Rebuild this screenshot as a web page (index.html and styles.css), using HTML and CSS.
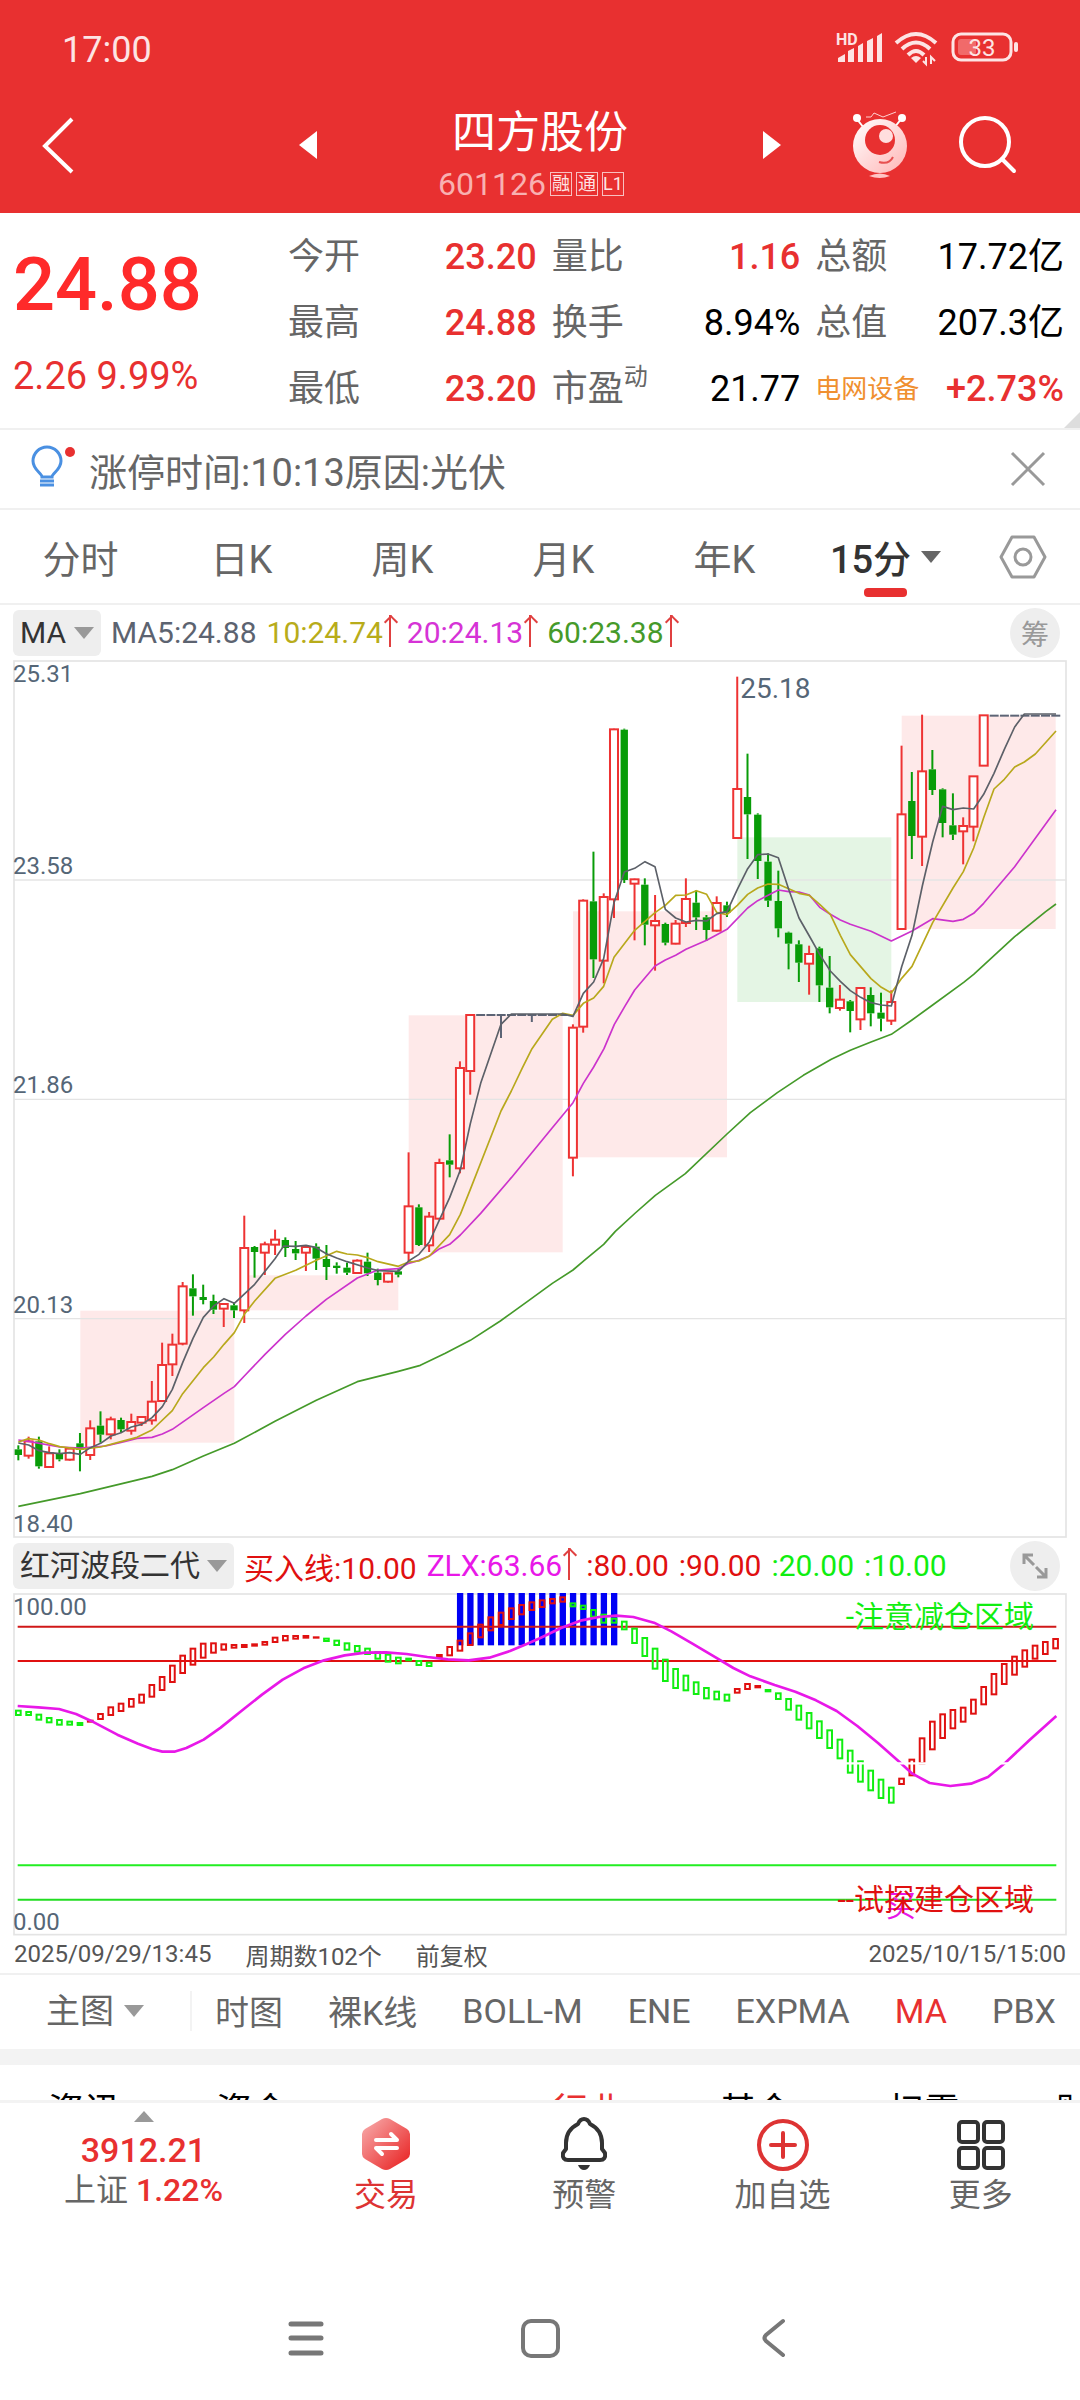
FILE: index.html
```html
<!DOCTYPE html>
<html lang="zh-CN">
<head>
  <meta charset="UTF-8" />
  <meta name="viewport" content="width=device-width, initial-scale=1" />
  <title>四方股份 601126</title>
  <link rel="stylesheet" href="styles.css">
</head>
<body>
  <header class="top">
    <div class="status">
      <span>17:00</span>
      <svg class="status-icons" width="184" height="36" viewBox="0 0 184 36" fill="#fde4e4" aria-hidden="true">
        <text class="hd" x="0" y="13">HD</text>
        <path d="M2 30V26L9 22V30ZM12 30V19L18 16V30ZM22 30V14L27 11V30ZM31 30V9L37 6V30ZM41 30V4L46 1V30Z" />
        <g fill="none" stroke="#fde4e4" stroke-width="4">
          <path d="M60 11Q80 -7 100 11" />
          <path d="M66 17Q80 4 94 17" />
          <path d="M72 23Q80 15 88 23" />
        </g>
        <path d="M75 26Q80 22 85 26L80 31Z" />
        <path d="M90 25V32L87 29M95 32V25L99 29" stroke="#fde4e4" stroke-width="2" fill="none" />
        <rect x="117" y="2" width="58" height="26" rx="8" fill="none" stroke="#fde4e4" stroke-width="3" />
        <rect x="122" y="7" width="18" height="16" rx="3" fill="#f16a6a" />
        <rect x="178" y="10" width="4" height="10" rx="2" />
        <text class="battery" x="146" y="24" text-anchor="middle">33</text>
      </svg>
    </div>
    <div class="titlebar">
      <button class="icon-btn back" aria-label="返回">
        <svg width="34" height="60" viewBox="0 0 34 60" fill="none" stroke="#fff" stroke-width="4"><path d="M31 4L4 31L31 57" /></svg>
      </button>
      <button class="icon-btn" aria-label="上一只">
        <svg width="20" height="30" viewBox="0 0 20 30" fill="#fff"><path d="M19 1V29L1 15Z" /></svg>
      </button>
      <div class="stock">
        <h1>四方股份</h1>
        <p><span>601126</span><i>融</i><i>通</i><i>L1</i></p>
      </div>
      <button class="icon-btn" aria-label="下一只">
        <svg width="20" height="30" viewBox="0 0 20 30" fill="#fff"><path d="M1 1V29L19 15Z" /></svg>
      </button>
      <div class="tools">
        <button class="icon-btn" aria-label="助手">
          <svg width="56" height="68" viewBox="0 0 56 68">
            <defs>
              <linearGradient id="robot" x1="0" y1="0" x2="1" y2="1">
                <stop offset="0" stop-color="#fff" /><stop offset="1" stop-color="#ffb5b5" />
              </linearGradient>
            </defs>
            <path d="M4 7L12 17M50 7L42 17" stroke="#fff" stroke-width="2" />
            <circle cx="5" cy="7" r="4" fill="#fff" /><circle cx="50" cy="7" r="4" fill="#fff" />
            <path d="M14 6L19 6L22 2L31 6L44 1" stroke="#ffd0d0" stroke-width="1" fill="none" />
            <circle cx="28" cy="35" r="27" fill="url(#robot)" />
            <circle cx="28" cy="29" r="15" fill="#e83030" />
            <circle cx="34" cy="25" r="7" fill="#ffdede" />
            <path d="M27 51Q37 54 41 46" stroke="#e85050" stroke-width="2" fill="none" />
            <path d="M17 65Q28 60 38 65Q28 69 17 65Z" fill="#ffc4c4" />
          </svg>
        </button>
        <button class="icon-btn" aria-label="搜索">
          <svg width="60" height="60" viewBox="0 0 60 60" fill="none" stroke="#fff" stroke-width="4" stroke-linecap="round"><circle cx="27" cy="27" r="24" /><path d="M44 44L56 56" /></svg>
        </button>
      </div>
    </div>
  </header>

  <section class="quote">
    <div class="price">
      <strong>24.88</strong>
      <span>2.26 9.99%</span>
    </div>
    <dl>
      <div><dt>今开</dt><dd class="up">23.20</dd></div>
      <div><dt>量比</dt><dd class="up">1.16</dd></div>
      <div><dt>总额</dt><dd>17.72亿</dd></div>
      <div><dt>最高</dt><dd class="up">24.88</dd></div>
      <div><dt>换手</dt><dd>8.94%</dd></div>
      <div><dt>总值</dt><dd>207.3亿</dd></div>
      <div><dt>最低</dt><dd class="up">23.20</dd></div>
      <div><dt>市盈<sup>动</sup></dt><dd>21.77</dd></div>
      <div><dt class="sector">电网设备</dt><dd class="up">+2.73%</dd></div>
    </dl>
  </section>

  <section class="notice">
    <svg width="46" height="46" viewBox="0 0 46 46" fill="none" stroke="#4a90e2" stroke-width="3">
      <path d="M11 31C11 27 2 24 2 15A14 14 0 0 1 30 15C30 24 21 27 21 31Z" />
      <path d="M9 35H23M9 39H23" />
      <circle cx="39" cy="6" r="5" fill="#e83030" stroke="none" />
    </svg>
    <p>涨停时间:10:13原因:光伏</p>
    <button class="icon-btn" aria-label="关闭">
      <svg width="36" height="36" viewBox="0 0 36 36" stroke="#999" stroke-width="3"><path d="M2 2L34 34M34 2L2 34" /></svg>
    </button>
  </section>

  <nav class="periods">
    <button>分时</button>
    <button>日K</button>
    <button>周K</button>
    <button>月K</button>
    <button>年K</button>
    <button class="active">15分<span class="caret"></span></button>
    <button aria-label="设置">
      <svg width="48" height="44" viewBox="0 0 48 44" fill="none" stroke="#999" stroke-width="3" stroke-linejoin="round"><path d="M13 2H35L46 22L35 42H13L2 22Z" /><circle cx="24" cy="22" r="8" /></svg>
    </button>
  </nav>

  <div class="legend">
    <label class="chip"><select aria-label="主图指标"><option>MA</option></select><span class="caret"></span></label>
    <span class="ma5">MA5:24.88</span>
    <span class="ma10">10:24.74<b class="rise"></b></span>
    <span class="ma20">20:24.13<b class="rise"></b></span>
    <span class="ma60">60:23.38<b class="rise"></b></span>
    <button class="round">筹</button>
  </div>
  <div class="chart">
    <svg id="kline" viewBox="38 2 3162 2634"></svg>
    <div class="axis"><span>25.31</span><span>23.58</span><span>21.86</span><span>20.13</span><span>18.40</span></div>
    <span class="peak">25.18</span>
  </div>

  <div class="legend">
    <label class="chip"><select aria-label="副图指标"><option>红河波段二代</option></select><span class="caret"></span></label>
    <span class="line-red">买入线:10.00</span>
    <span class="line-zlx">ZLX:63.66<b class="rise"></b></span>
    <span class="line-red">:80.00</span>
    <span class="line-red">:90.00</span>
    <span class="line-green">:20.00</span>
    <span class="line-green">:10.00</span>
    <button class="round" aria-label="全屏">
      <svg width="26" height="26" viewBox="0 0 26 26" fill="none" stroke="#999" stroke-width="3"><path d="M11 2H2V11M2 2L12 12M15 24H24V15M24 24L14 14" /></svg>
    </button>
  </div>
  <div class="chart">
    <svg id="band" viewBox="38 188 3162 1028"></svg>
    <div class="axis"><span>100.00</span><span>0.00</span></div>
    <span class="mark reduce">-注意减仓区域</span>
    <span class="mark buy">买</span>
    <span class="mark build">--试探建仓区域</span>
  </div>
  <div class="dates">
    <span>2025/09/29/13:45</span><span>周期数102个</span><span>前复权</span><span>2025/10/15/15:00</span>
  </div>

  <nav class="indicators">
    <label><select aria-label="图表位置"><option>主图</option></select><span class="caret"></span></label>
    <button>时图</button>
    <button>裸K线</button>
    <button>BOLL-M</button>
    <button>ENE</button>
    <button>EXPMA</button>
    <button class="active">MA</button>
    <button>PBX</button>
  </nav>

  <nav class="more-tabs">
    <a href="#">资讯</a><a href="#">资金</a><a href="#"></a><a href="#" class="active">行业</a><a href="#">基金</a><a href="#">扫雷</a><a href="#">财务</a>
  </nav>

  <footer class="actions">
    <div class="index">
      <span class="fold"></span>
      <b>3912.21</b>
      <span>上证 <em>1.22%</em></span>
    </div>
    <button class="trade">
      <svg width="54" height="56" viewBox="0 0 54 56">
        <defs>
          <linearGradient id="hex" x1="0" y1="0" x2="1" y2="1">
            <stop offset="0" stop-color="#f8b0b0" /><stop offset="1" stop-color="#e81c1c" />
          </linearGradient>
        </defs>
        <path d="M23 3Q27 1 31 3L48 13Q51 15 51 18V38Q51 41 48 43L31 53Q27 55 23 53L6 43Q3 41 3 38V18Q3 15 6 13Z" fill="url(#hex)" />
        <path d="M17 24H38L32 18M38 32H17L23 38" fill="none" stroke="#fff" stroke-width="4" stroke-linecap="round" stroke-linejoin="round" />
      </svg>
      交易
    </button>
    <button>
      <svg width="54" height="56" viewBox="0 0 54 56" fill="none" stroke="#333" stroke-width="4" stroke-linejoin="round">
        <path d="M27 3Q31 3 33 8Q45 14 45 27V33L48 37Q49 44 43 44H11Q5 44 6 37L9 33V27Q9 14 21 8Q23 3 27 3Z" />
        <path d="M21 49H33Q31 54 27 54Q23 54 21 49Z" fill="#333" stroke="none" />
      </svg>
      预警
    </button>
    <button>
      <svg width="54" height="56" viewBox="0 0 54 56" fill="none" stroke="#dd3333" stroke-width="4" stroke-linecap="round"><circle cx="27" cy="29" r="24" /><path d="M15 29H39M27 17V41" /></svg>
      加自选
    </button>
    <button>
      <svg width="54" height="56" viewBox="0 0 54 56" fill="none" stroke="#333" stroke-width="4"><rect x="5" y="6" width="19" height="20" rx="3" /><rect x="30" y="6" width="19" height="20" rx="3" /><rect x="5" y="32" width="19" height="20" rx="3" /><rect x="30" y="32" width="19" height="20" rx="3" /></svg>
      更多
    </button>
  </footer>

  <nav class="system">
    <button class="icon-btn" aria-label="最近任务">
      <svg width="40" height="40" viewBox="0 0 40 40" stroke="#777" stroke-width="5" stroke-linecap="round"><path d="M5 6H35M5 20H35M5 35H35" /></svg>
    </button>
    <button class="icon-btn" aria-label="主屏幕">
      <svg width="40" height="40" viewBox="0 0 40 40" fill="none" stroke="#777" stroke-width="4"><rect x="3" y="3" width="35" height="35" rx="8" /></svg>
    </button>
    <button class="icon-btn" aria-label="后退">
      <svg width="40" height="40" viewBox="0 0 40 40" fill="none" stroke="#777" stroke-width="4" stroke-linecap="round"><path d="M29 3L12 17Q9 20 12 23L29 37" /></svg>
    </button>
  </nav>
  <script src="script.js"></script>
</body>
</html>
```
FILE: styles.css
```css
* {
  box-sizing: border-box;
}
body {
  margin: 0;
  min-height: 100vh;
  display: flex;
  flex-direction: column;
  background: #fff;
  color: #666;
  font-family: Roboto, "Noto Sans CJK SC", sans-serif;
  font-size: 36px;
  overflow-x: hidden;
}
h1, p, dl, dd {
  margin: 0;
}
button, select {
  appearance: none;
  background: none;
  border: none;
  margin: 0;
  padding: 0;
  color: inherit;
  font: inherit;
  cursor: pointer;
}
svg {
  display: block;
  flex: none;
  overflow: visible;
}
.up {
  color: #e83030;
}
.caret {
  flex: none;
  border: 10px solid transparent;
  border-top: 12px solid #999;
  border-bottom: none;
}

/* red header */
.top {
  background: #e83030;
  color: #fff;
  height: 213px;
}
.status {
  display: flex;
  justify-content: space-between;
  align-items: center;
  height: 100px;
  padding: 0 60px 0 62px;
  color: #fde4e4;
}
.hd {
  font-size: 16px;
  font-weight: 700;
}
.battery {
  font-size: 24px;
}
.titlebar {
  display: grid;
  grid-template-columns: 288px 40px 1fr 40px 288px;
  grid-template-rows: 90px;
  align-items: center;
}
.icon-btn {
  display: flex;
  align-items: center;
  justify-content: center;
}
.back {
  justify-self: start;
  padding-left: 41px;
}
.stock {
  padding-top: 14px;
  text-align: center;
}
.stock h1 {
  font-size: 44px;
  font-weight: 400;
  line-height: 64px;
}
.stock p {
  display: flex;
  justify-content: center;
  align-items: center;
  gap: 4px;
  padding-right: 18px;
  font-size: 32px;
  line-height: 38px;
  color: #f8b1b1;
}
.stock i {
  min-width: 22px;
  border: 1px solid #f8c0c0;
  font-size: 18px;
  font-style: normal;
  line-height: 22px;
  color: #fde4e4;
}
.tools {
  display: flex;
  align-items: center;
  gap: 50px;
  padding-left: 60px;
}

/* quote numbers */
.quote {
  position: relative;
  display: grid;
  grid-template-columns: 260px 1fr;
  gap: 15px;
  height: 217px;
  padding: 11px 16px 0 13px;
  border-bottom: 2px solid #f0f0f0;
}
.quote::after {
  content: "";
  position: absolute;
  right: 0;
  bottom: 0;
  border-left: 16px solid transparent;
  border-bottom: 16px solid #ddd;
}
.price {
  color: #e83030;
}
.price strong {
  display: block;
  font-size: 74px;
  font-weight: 500;
  line-height: 122px;
  color: #ff2a2a;
}
.price span {
  font-size: 38px;
  line-height: 60px;
}
.quote dl {
  display: grid;
  grid-template-columns: repeat(3, 1fr);
  grid-auto-rows: 66px;
  column-gap: 15px;
}
.quote dl div {
  display: flex;
  justify-content: space-between;
  align-items: center;
  line-height: 66px;
  white-space: nowrap;
}
.quote dd {
  font-weight: 500;
}
.quote dd:not(.up) {
  color: #000;
  font-weight: 400;
}
.quote sup {
  font-size: 24px;
  line-height: 0;
  vertical-align: 16px;
}
.quote .sector {
  font-size: 26px;
  color: #f09030;
}

.notice {
  display: flex;
  align-items: center;
  gap: 12px;
  height: 80px;
  padding: 0 34px 0 31px;
  border-bottom: 2px solid #f0f0f0;
}
.notice p {
  flex: 1;
  font-size: 38px;
}

/* period tabs */
.periods {
  display: grid;
  grid-template-columns: repeat(6, 161fr) 114fr;
  height: 95px;
  border-bottom: 2px solid #f0f0f0;
}
.periods button {
  position: relative;
  display: flex;
  align-items: center;
  justify-content: center;
  font-size: 38px;
}
.periods .active {
  gap: 10px;
  color: #333;
  font-weight: 500;
}
.periods .active .caret {
  border-top-color: #666;
}
.periods .active::after {
  content: "";
  position: absolute;
  bottom: 6px;
  width: 43px;
  height: 9px;
  border-radius: 4px;
  background: #e83030;
}

/* indicator legends */
.legend {
  display: flex;
  align-items: center;
  gap: 10px;
  height: 55px;
  padding: 0 20px 0 13px;
  font-size: 30px;
  white-space: nowrap;
}
.legend > span {
  display: flex;
}
.chip {
  display: flex;
  align-items: center;
  gap: 7px;
  height: 46px;
  padding: 0 7px;
  border-radius: 6px;
  background: #eee;
  color: #333;
}
.rise {
  width: 14px;
  height: 32px;
  background: linear-gradient(#e04040, #e04040) center / 2px 100% no-repeat;
  position: relative;
}
.rise::before {
  content: "";
  position: absolute;
  left: 3px;
  top: 2px;
  width: 8px;
  height: 8px;
  border: solid #e04040;
  border-width: 2px 0 0 2px;
  transform: rotate(45deg);
}
.ma5 { color: #5c6370; }
.ma10 { color: #b8ac1a; }
.ma20 { color: #d633d6; }
.ma60 { color: #459a2a; }
.line-red { color: #e01010; }
.line-zlx { color: #e818e8; }
.line-green { color: #10ee10; }
.round {
  display: flex;
  align-items: center;
  justify-content: center;
  width: 50px;
  height: 50px;
  margin-left: auto;
  border-radius: 50%;
  background: #eee;
  color: #999;
  font-size: 28px;
}

/* charts */
.chart {
  position: relative;
  margin: 0 13px;
}
.chart svg {
  width: 100%;
}
.axis span {
  position: absolute;
  left: 0;
  bottom: 0;
  font-size: 24px;
  line-height: 28px;
  color: #556677;
}
.axis span:first-child {
  top: 0;
}
.axis span:nth-child(2):not(:last-child) { bottom: 75%; }
.axis span:nth-child(3) { bottom: 50%; }
.axis span:nth-child(4) { bottom: 25%; }
.peak {
  position: absolute;
  left: 69%;
  top: 12px;
  font-size: 28px;
  color: #556677;
}
.mark {
  position: absolute;
  right: 33px;
  font-size: 30px;
  line-height: 40px;
}
.reduce { top: 4px; color: #10ee10; }
.build { bottom: 16px; color: #e01010; }
.buy { right: 151px; bottom: 10px; color: #e818e8; }
.dates {
  display: flex;
  align-items: center;
  gap: 34px;
  height: 37px;
  padding: 0 14px;
  font-size: 24px;
  color: #555;
}
.dates span:last-child {
  margin-left: auto;
}

.indicators {
  display: flex;
  align-items: center;
  gap: 45px;
  height: 92px;
  padding: 0 20px 18px 46px;
  border-top: 2px solid #f0f0f0;
  background: linear-gradient(#f3f3f3, #f3f3f3) bottom / 100% 16px no-repeat;
  font-size: 34px;
  white-space: nowrap;
}
.indicators label {
  display: flex;
  align-items: center;
  gap: 10px;
  margin-right: -22px;
  padding-right: 46px;
  border-right: 2px solid #f3f3f3;
}
.indicators .active {
  color: #e83030;
}

/* next section, cut off by the action bar */
.more-tabs {
  display: flex;
  height: 35px;
  overflow: hidden;
}
.more-tabs a {
  flex: 0 0 168px;
  padding-top: 27px;
  text-align: center;
  line-height: 40px;
  color: #000;
  text-decoration: none;
}
.more-tabs .active {
  color: #e83030;
}

.actions {
  display: grid;
  grid-template-columns: 287px repeat(4, 1fr);
  border-top: 3px solid #f3f3f3;
  font-size: 32px;
}
.actions button {
  display: flex;
  flex-direction: column;
  align-items: center;
  padding-top: 13px;
  line-height: 46px;
}
.actions .trade {
  color: #dd3333;
}
.index {
  display: flex;
  flex-direction: column;
  align-items: center;
  line-height: 40px;
}
.index b, .index em {
  color: #e83030;
  font-weight: 500;
  font-style: normal;
}
.index b {
  font-size: 34px;
}
.fold {
  margin: 8px 0 8px;
  border: 10px solid transparent;
  border-bottom: 11px solid #999;
  border-top: none;
}

.system {
  display: grid;
  grid-template-columns: repeat(3, 234px);
  justify-content: center;
  margin-top: auto;
  padding-bottom: 42px;
}
```
FILE: script.js
```js
// Plot units are thirds of a pixel, candles are STEP apart
const LEFT = 54;
const STEP = 30.81;
const NS = 'http://www.w3.org/2000/svg';

function add(svg, tag, attrs) {
  const el = document.createElementNS(NS, tag);
  for (const key in attrs) el.setAttribute(key, attrs[key]);
  svg.appendChild(el);
}

function line(svg, x1, y1, x2, y2, stroke, width) {
  add(svg, 'line', { x1, y1, x2, y2, stroke, 'stroke-width': width });
}

// each group: first candle, y base, then colour bodyTop bodyBottom high low
const candles = [
  { from: 0, base: 1620, bars: `g 750 767 738 783,r 726 769 712 778,g 726 801 712 808,r 762 803 741 806,g 763 780 750 786,
r 748 781 745 784,g 732 752 701 816,r 687 767 663 782,g 679 706 636 730,r 660 705 652 720,g 662 690 655 700,r 668 694 643 706,
r 653 670 650 680,r 607 663 545 676,r 497 605 430 608,r 436 495 403 530,r 261 433 248 438,g 267 291 225 349,g 293 302 256 315,
g 305 331 286 344,r 314 328 312 383,g 318 333 310 356,r 146 333 49 371,g 143 158 140 235,r 135 160 127 227,r 121 136 91 167,
g 122 146 114 173,g 149 162 125 182,r 143 160 140 215,g 142 178 132 212,g 179 203 137 242,g 199 206 189 223,g 205 220 190 227,
r 184 221 180 222,g 187 222 160 230,g 220 242 208 258,r 222 247 220 250,g 216 226 208 234` },
  { from: 38, base: 900, bars: `r 741 880 579 905,g 744 857 735 860,r 772 858 758 878,r 611 778 598 780,g 603 616 525 654,
r 326 627 306 642,r 167 335 165 406,k 167 167 167 167,k 167 167 167 167,k 167 167 167 236,k 167 167 167 167,k 167 167 167 167,
k 167 167 167 188,k 167 167 167 167,k 167 167 167 167,k 167 167 167 167,r 205 595 195 651` },
  { from: 55, base: 0, bars: `r 724 1102 720 1120,g 726 900 577 956,r 713 904 702 972,r 210 720 208 776,g 211 662 208 671,
r 660 673 658 843,g 676 796 657 858,r 785 798 707 934,g 794 850 790 858,r 793 853 782 855,r 719 791 657 803,g 730 774 693 812,
g 774 812 767 845,r 731 814 711 817,g 738 760 727 773,r 389 536 52 536,g 413 465 283 599,g 466 605 462 659,g 607 724 582 743,
g 725 807 634 834,g 820 853 817 930,g 855 910 843 968,r 884 913 859 1006,g 867 978 862 1028,g 985 1044 890 1062,
r 1021 1046 977 1054,g 1026 1055 1022 1119,r 986 1080 985 1112,g 1007 1062 984 1101,g 1060 1078 1000 1116,r 1028 1084 993 1097,
r 465 809 259 811,g 425 530 338 599,r 336 532 166 620,g 330 392 272 407,g 390 491 387 534,g 498 526 402 542,r 500 516 474 615,
r 351 502 350 546,r 168 319 168 319,k 169 169 169 169,k 169 169 169 169,k 169 169 169 169,k 169 169 169 169,k 169 169 169 169,
k 169 169 169 169,k 169 169 169 169` }
];

// moving averages: [dx, dy, points]
const averages = {
  '#459a2a': [
    [0, 1620, '54,921 240,883 393,846 455,831 516,811 609,770 702,732 824,666 948,603 1071,547 1194,516 1260,498'],
    [0, 0, '1335,2082 1410,2043 1500,1985 1590,1920 1656,1872 1718,1832 1752,1803 1810,1755 1845,1716 1905,1661 1965,1608 2055,1543 2180,1424 2250,1360 2331,1300 2409,1248'],
    [2100, 0, '393,1200 450,1173 512,1148 573,1125 635,1082 697,1037 790,969 820,945 943,832 1036,757 1067,734']
  ],
  '#cc33cc': [
    [0, 1620, '54,722 85,726 178,743 240,746 316,740 362,729 410,717 455,714 486,704 516,690 609,625 671,582 702,562 732,530 794,465 855,405 917,350 978,300 1071,236 1133,212 1194,208'],
    [1140, 900, '85,912 116,903 147,890 178,868 208,855 240,827 301,762 393,655 516,505 547,468 578,430 609,372 640,323 671,268 702,195 733,142 763,92 824,20'],
    [1560, 0, '435,902 466,888 497,870 559,843 620,810 682,746 712,724 774,692 805,697 836,698 867,707'],
    [2100, 0, '358,744 390,765 420,782 450,795 512,816 573,845 635,815 697,778 758,786 789,780 820,762 850,732 943,622 1067,451']
  ],
  '#b8a81c': [
    [0, 1620, '54,728 85,718 116,722 147,733 178,742 240,750 301,743 362,727 410,714 455,692 516,634 547,583 609,505 640,473 671,435 702,400 732,345 763,305 824,237 886,213 948,183 1009,156 1040,164 1071,167 1102,175 1133,187 1194,201'],
    [1140, 900, '85,908 116,905 147,890 208,826 240,765 270,690 362,455 393,395 425,328 455,268 516,180 547,162 578,168'],
    [1560, 0, '189,1032 220,1016 250,981 281,894 343,813 404,760 435,738 466,708 497,707 528,694 559,705 589,759 620,766 651,738 682,705 712,686 743,674 774,675 805,688'],
    [2100, 0, '296,702 327,708 358,735 390,765 420,828 450,886 512,958 543,984 573,1001 604,957 635,921 697,790 758,686 789,637 820,566 850,475 881,389 912,360 943,323 972,308 1005,284 1067,215']
  ],
  '#5c6068': [
    [0, 1620, '54,731 85,737 116,754 147,760 178,763 208,760 240,765 270,745 301,732 332,710 362,700 393,683 424,675 455,655 486,622 516,570 547,490 578,417 609,354 640,320 671,298 702,312 763,255 824,178 850,140 886,141 917,138 945,144 978,163 1009,176 1040,187 1102,206 1133,214 1194,216 1225,185 1256,165'],
    [1140, 900, '147,848 178,780 208,715 240,632 270,493 301,372 362,195 393,164 547,164 578,171'],
    [1560, 0, '189,1002 220,968 250,898 281,730 312,638 343,627 374,607 404,622 435,750 466,776 497,788 528,783 559,785 589,763 620,757 651,690 682,628 712,586 743,584 774,595 805,690 836,776'],
    [2100, 0, '327,830 358,885 390,935 420,966 450,994 481,1014 512,1030 543,1037 573,1040 604,922 635,828 666,680 697,548 727,441 758,451 789,446 820,449 850,405 881,342 912,270 943,203 972,164 1067,164']
  ]
};

// trading day bands: x, top, bottom, colour
const days = [
  [240, 1954, 2350, '#fee9e9'],
  [732, 1848, 1953, '#fee9e9'],
  [1225, 1068, 1779, '#fee9e9'],
  [1718, 756, 1494, '#fee9e9'],
  [2211, 534, 1028, '#e4f5e4'],
  [2704, 169, 809, '#fee9e9']
];

const colors = { r: '#ee3333', g: '#089c08', k: '#5c6475' };

function drawKline(svg) {
  days.forEach(([x, top, bottom, fill]) => add(svg, 'rect', { x, y: top, width: 462, height: bottom - top, fill }));
  [662, 1320, 1978].forEach(y => line(svg, 40, y, 3198, y, '#e4e4e4', 4));
  add(svg, 'rect', { x: 41, y: 5, width: 3156, height: 2628, fill: 'none', stroke: '#e4e4e4', 'stroke-width': 5 });

  candles.forEach(group => {
    group.bars.split(',').forEach((bar, n) => {
      const [type, ...v] = bar.trim().split(' ');
      const [top, bottom, high, low] = v.map(y => Number(y) + group.base);
      const x = LEFT + (group.from + n) * STEP;
      const color = colors[type];
      if (high < top) line(svg, x, high, x, top, color, 6);
      if (low > bottom) line(svg, x, bottom, x, low, color, 6);
      if (type === 'k') line(svg, x - 13, top, x + 14, top, color, 6);
      if (type === 'g') add(svg, 'rect', { x: x - 11, y: top, width: 22, height: bottom - top, fill: color });
      if (type === 'r') add(svg, 'rect', { x: x - 12, y: top, width: 24, height: bottom - top, fill: '#fff', stroke: color, 'stroke-width': 6 });
    });
  });

  for (const stroke in averages) {
    const points = averages[stroke].map(([dx, dy, list]) => list.split(' ').map(p => {
      const [x, y] = p.split(',').map(Number);
      return `${x + dx},${y + dy}`;
    }).join(' ')).join(' ');
    add(svg, 'polyline', { points, fill: 'none', stroke, 'stroke-width': 5, 'stroke-linejoin': 'round' });
  }
}

// band indicator: colour top bottom
const bands = `g 538 557,g 542 557,g 550 571,g 560 579,g 566 586,g 571 586,g 575 587,r 568 577,r 548 569,r 528 557,r 517 545,
r 503 532,r 490 520,r 461 502,r 437 482,r 403 458,r 373 431,r 352 406,r 337 385,r 336 370,r 339 361,r 341 355,r 341 353,r 339 349,
r 332 346,r 319 338,r 314 333,r 314 328,r 314 325,r 318 324,g 322 335,g 328 347,g 336 361,g 344 367,g 352 374,g 362 388,g 370 397,
g 379 402,g 382 393,g 389 407,g 394 410,r 371 383,r 347 378,r 328 364,r 306 347,r 280 324,r 258 303,r 244 287,r 231 269,r 221 255,
r 213 242,r 207 233,r 203 222,r 198 217,g 216 231,g 223 239,g 236 262,g 250 280,g 262 280,g 271 300,g 292 341,g 320 380,g 352 418,
g 385 455,g 413 476,g 433 483,g 453 494,g 470 507,g 481 510,g 490 514,r 473 490,r 458 479,r 464 474,g 476 486,g 486 509,g 503 541,
g 523 571,g 545 597,g 570 626,g 597 656,g 625 687,g 658 730,g 690 757,g 718 783,g 745 806,g 769 820,r 742 764,r 685 738,r 621 702,
r 571 660,r 549 626,r 536 597,r 529 577,r 505 553,r 467 525,r 428 495,r 398 464,r 376 436,r 357 412,r 343 388,r 332 374,r 323 357`;

const zlx = '52,527 114,531 176,536 227,551 271,571 351,613 413,640 455,656 486,664 522,664 558,653 610,628 661,592 723,542 785,493 847,448 909,414 971,390 1033,375 1095,367 1157,366 1219,371 1281,380 1343,387 1405,390 1467,382 1529,362 1581,340 1620,323 1682,293 1744,270 1796,260 1847,256 1899,260 1961,277 2013,303 2075,339 2137,376 2199,413 2250,438 2323,464 2385,484 2447,510 2509,542 2571,587 2633,638 2695,693 2736,730 2788,758 2850,767 2912,760 2963,740 3015,697 3087,630 3168,557';

function drawBand(svg) {
  add(svg, 'rect', { x: 41, y: 191, width: 3156, height: 1022, fill: 'none', stroke: '#e4e4e4', 'stroke-width': 5 });
  for (let i = 43; i <= 58; i++) {
    add(svg, 'rect', { x: LEFT + i * STEP - 9, y: 188, width: 19, height: 157, fill: '#0000f5' });
  }
  [[289, '#d01818'], [392, '#e01010'], [1005, '#22ee22'], [1108, '#22dd22']].forEach(([y, c]) => line(svg, 52, y, 3168, y, c, 6));
  bands.split(',').forEach((bar, i) => {
    const [type, top, bottom] = bar.trim().split(' ');
    add(svg, 'rect', {
      x: LEFT + i * STEP - 7, y: Number(top) + 3, width: 14, height: Math.max(bottom - top - 6, 1),
      fill: 'none', stroke: type === 'r' ? '#e01010' : '#10ee10', 'stroke-width': 6
    });
  });
  add(svg, 'polyline', { points: zlx, fill: 'none', stroke: '#e818e8', 'stroke-width': 8, 'stroke-linejoin': 'round' });
  line(svg, 2400, 699, 3190, 699, '#fff', 7);
}

drawKline(document.getElementById('kline'));
drawBand(document.getElementById('band'));
```
